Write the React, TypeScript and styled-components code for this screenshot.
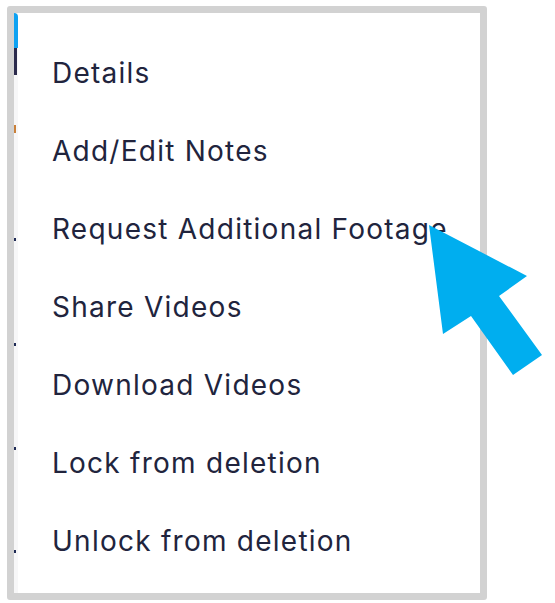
import styled, { createGlobalStyle } from "styled-components";

const items = [
  "Details",
  "Add/Edit Notes",
  "Request Additional Footage",
  "Share Videos",
  "Download Videos",
  "Lock from deletion",
  "Unlock from deletion",
];

const GlobalStyle = createGlobalStyle`
  body {
    margin: 0;
    background: #ffffff;
  }
`;

function App() {
  return (
    <Page>
      <GlobalStyle />
      <Menu>
        <Peek>
          <PeekButton />
          <PeekBar />
          <PeekMark $color="#c9803a" $top={50} $height={8} />
          <PeekMark $color="#1f2a55" $top={105} $height={3} />
          <PeekMark $color="#1f2a55" $top={102} $height={3} />
          <PeekMark $color="#1f2a55" $top={101} $height={3} />
          <PeekMark $color="#1f2a55" $top={100} $height={3} />
        </Peek>
        <List>
          {items.map((label) => (
            <Item key={label}>{label}</Item>
          ))}
        </List>
      </Menu>
      <Pointer viewBox="0 0 120 160" width="120" height="160">
        <polygon
          points="4,5 102,56 74,76 117,135 88,155 46,96 18,114"
          fill="#00aeef"
        />
      </Pointer>
    </Page>
  );
}

const Page = styled.div`
  position: relative;
  width: 555px;
  height: 603px;
  padding: 6px 0 0 7px;
  box-sizing: border-box;
`;

const Menu = styled.div`
  display: flex;
  width: 480px;
  height: 594px;
  box-sizing: border-box;
  border: 7px solid #d2d2d2;
  border-radius: 3px;
  background: #ffffff;
`;

const Peek = styled.div`
  display: flex;
  flex-direction: column;
  width: 4px;
  flex-shrink: 0;
  background: #f7f7f8;
`;

const PeekButton = styled.div`
  height: 35px;
  background: #0ea2f2;
  border-top-right-radius: 6px;
`;

const PeekBar = styled.div`
  height: 27px;
  width: 3px;
  background: #2b2a4c;
`;

const PeekMark = styled.div<{ $color: string; $top: number; $height: number }>`
  margin-top: ${({ $top }) => $top}px;
  height: ${({ $height }) => $height}px;
  width: 2px;
  background: ${({ $color }) => $color};
`;

const List = styled.ul`
  list-style: none;
  margin: 0;
  padding: 21px 0 0 34px;
`;

const Item = styled.li`
  height: 78px;
  line-height: 78px;
  font-family: Inter, "Open Sans", sans-serif;
  font-size: 28px;
  font-weight: 400;
  letter-spacing: 1.25px;
  color: #21243d;
  white-space: nowrap;
`;

const Pointer = styled.svg`
  position: absolute;
  left: 425px;
  top: 220px;
`;

export default App;
